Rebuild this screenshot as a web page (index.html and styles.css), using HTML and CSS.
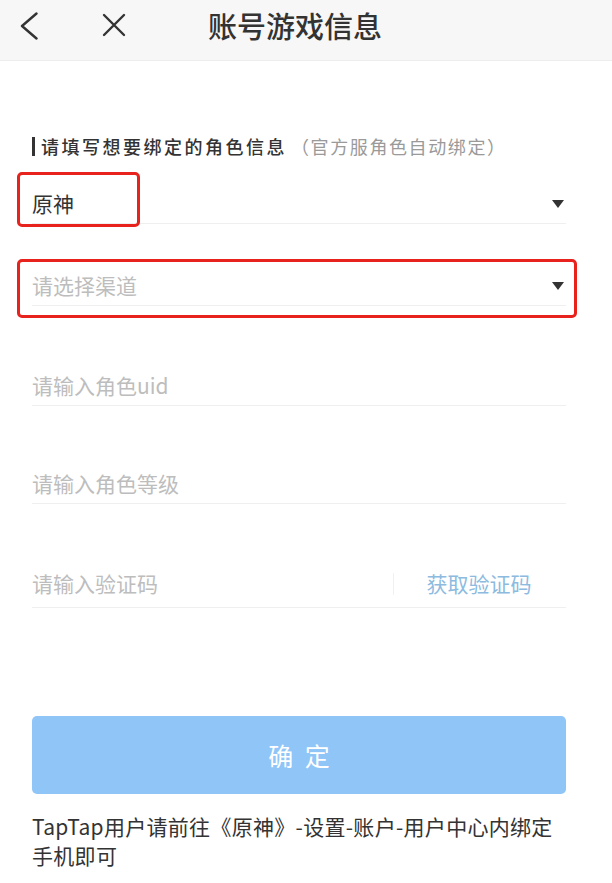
FILE: index.html
```html
<!DOCTYPE html>
<html lang="zh-CN">
<head>
<meta charset="utf-8">
<title>账号游戏信息</title>
<link rel="stylesheet" href="styles.css">
</head>
<body>
<header class="topbar">
  <svg class="icon-back" width="18" height="28" viewBox="0 0 18 28" aria-hidden="true">
    <path d="M16.5 1.5 L2 14 L16.5 26.5" fill="none" stroke="#333" stroke-width="2.4" stroke-linecap="round" stroke-linejoin="round"/>
  </svg>
  <svg class="icon-close" width="24" height="24" viewBox="0 0 24 24" aria-hidden="true">
    <path d="M2 2 L22 22 M22 2 L2 22" fill="none" stroke="#333" stroke-width="2.4" stroke-linecap="round"/>
  </svg>
  <h1 class="title">账号游戏信息</h1>
</header>

<main class="content">
  <div class="section-label">
    <span class="bar"></span>
    <span class="label-main">请填写想要绑定的角色信息</span>
    <span class="label-sub">（官方服角色自动绑定）</span>
  </div>

  <div class="field field--first">
    <span class="value">原神</span>
    <span class="caret"></span>
    <span class="mark mark--game"></span>
  </div>

  <div class="field field--near">
    <span class="placeholder">请选择渠道</span>
    <span class="caret"></span>
    <span class="mark mark--channel"></span>
  </div>

  <div class="field">
    <span class="placeholder">请输入角色uid</span>
  </div>

  <div class="field field--tight">
    <span class="placeholder">请输入角色等级</span>
  </div>

  <div class="field field--code">
    <span class="placeholder">请输入验证码</span>
    <span class="code-btn">获取验证码</span>
  </div>

  <button class="submit">确 定</button>

  <p class="note">TapTap用户请前往《原神》-设置-账户-用户中心内绑定<br>手机即可</p>
</main>
</body>
</html>
```

FILE: styles.css
```css
html, body {
  margin: 0;
  padding: 0;
  background: #ffffff;
}

body {
  font-family: "Noto Sans CJK SC", "Noto Sans", sans-serif;
  color: #333333;
}

.topbar {
  height: 60px;
  box-sizing: content-box;
  background: #f7f7f7;
  border-bottom: 1px solid #ededed;
  display: flex;
  align-items: center;
  padding: 0 0 0 20px;
}

.topbar > * {
  position: relative;
  top: -5px;
}

.icon-back {
  flex: none;
  top: -4px;
}

.icon-close {
  flex: none;
  margin-left: 64px;
}

.title {
  margin: 0 0 0 82px;
  font-size: 29px;
  font-weight: 500;
  line-height: 1;
  color: #333333;
}

.content {
  padding: 0 46px 0 32px;
}

.section-label {
  margin-top: 75px;
  display: flex;
  align-items: center;
  height: 20px;
  white-space: nowrap;
}

.bar {
  width: 3px;
  height: 19px;
  background: #333333;
  margin-right: 6px;
  flex: none;
}

.label-main {
  font-size: 18px;
  font-weight: 500;
  letter-spacing: 2.5px;
  color: #333333;
  line-height: 1;
}

.label-sub {
  font-size: 18px;
  letter-spacing: 1.6px;
  color: #9a9a9a;
  line-height: 1;
  margin-left: 4px;
}

.field {
  position: relative;
  height: 40px;
  box-sizing: border-box;
  border-bottom: 1px solid #efefef;
  display: flex;
  align-items: center;
  margin-top: 60px;
  font-size: 21px;
  line-height: 1;
}

.field--first {
  margin-top: 28px;
}

.field--near {
  margin-top: 42px;
}

.field--tight {
  margin-top: 58px;
}

.field--code {
  margin-top: 64px;
  padding-bottom: 8px;
}

.value {
  color: #333333;
}

.placeholder {
  color: #bdbdbd;
}

.caret {
  margin-left: auto;
  margin-right: 2px;
  width: 0;
  height: 0;
  border-left: 6.5px solid transparent;
  border-right: 6.5px solid transparent;
  border-top: 8px solid #333333;
}

.mark {
  position: absolute;
  box-sizing: border-box;
  border: 3px solid #e8231e;
  border-radius: 5px;
  pointer-events: none;
}

.mark--game {
  left: -15px;
  top: -12px;
  width: 123px;
  height: 55px;
}

.mark--channel {
  left: -15px;
  right: -11px;
  top: -7px;
  bottom: -13px;
}

.code-btn {
  margin-left: auto;
  width: 173px;
  height: 22px;
  box-sizing: border-box;
  border-left: 1px solid #f1f1f1;
  display: flex;
  align-items: center;
  justify-content: center;
  color: #8dbbe0;
  font-size: 21px;
  padding-right: 2px;
}

.submit {
  display: block;
  width: 100%;
  height: 78px;
  margin-top: 108px;
  border: none;
  border-radius: 5px;
  background: #8fc5f7;
  color: #ffffff;
  font-family: "Noto Sans CJK SC", "Noto Sans", sans-serif;
  font-size: 25px;
  letter-spacing: 3px;
  padding: 0 0 0 3px;
}

.note {
  margin: 18px 0 0 0;
  font-size: 21px;
  line-height: 29px;
  letter-spacing: 0.3px;
  color: #333333;
  white-space: nowrap;
}
```
